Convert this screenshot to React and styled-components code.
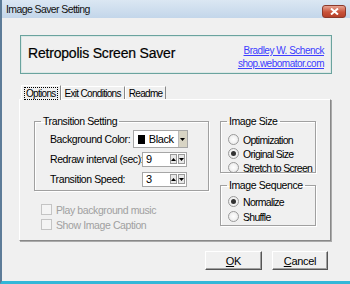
import React from 'react';
import styled, { createGlobalStyle } from 'styled-components';

const Global = createGlobalStyle`
  html, body { margin: 0; padding: 0; background: #f0f0f0; }
  body {
    font-family: "Liberation Sans", Arial, sans-serif;
    font-size: 10.5px;
    letter-spacing: -0.4px;
    color: #000;
  }
`;

const Win = styled.div`
  width: 350px;
  height: 284px;
  box-sizing: border-box;
  background: #f0f0f0;
  border-left: 2px solid #5d7c98;
  border-bottom: 3px solid #33b7d8;
  display: flex;
  flex-direction: column;
  overflow: hidden;
`;

const TitleBar = styled.div`
  height: 18px;
  flex: none;
  display: flex;
  align-items: center;
  justify-content: space-between;
  padding: 0 4px 0 4px;
  background: linear-gradient(#dbe7f3, #c3d6ea);
  font-size: 10.5px;
  letter-spacing: -0.6px;
  color: #111;
`;

const CloseBtn = styled.div`
  width: 22px;
  height: 11px;
  margin-top: 5px;
  border: 1px solid #8b3a2c;
  border-radius: 3px;
  background: linear-gradient(#e7a493, #c9533a 55%, #b6412a);
  display: flex;
  align-items: center;
  justify-content: center;
  svg { display: block; }
`;

const Body = styled.div`
  flex: 1;
  padding: 17px 0 0 18px;
  display: flex;
  flex-direction: column;
  align-items: flex-start;
`;

const Header = styled.div`
  width: 312px;
  height: 39px;
  box-sizing: border-box;
  border: 1px solid #6aa39e;
  box-shadow: inset 0 0 0 1px #dce8e6;
  display: flex;
  align-items: center;
  justify-content: space-between;
  padding: 0 7px 0 7px;
`;

const AppName = styled.div`
  font-size: 14px;
  letter-spacing: -0.2px;
  margin-top: -4px;
  -webkit-text-stroke: 0.2px #000;
`;

const Links = styled.div`
  display: flex;
  flex-direction: column;
  align-items: flex-end;
  gap: 2px;
  margin-top: 5px;
  a {
    color: #3d3dff;
    font-size: 10px;
    text-decoration: underline;
    letter-spacing: -0.5px;
  }
`;

const Tabs = styled.div`
  display: flex;
  margin-top: 11px;
  margin-left: 1px;
  height: 14px;
  align-items: flex-end;
  font-size: 10px;
  letter-spacing: -0.7px;
`;

const Tab = styled.div`
  height: ${p => (p.$active ? '15px' : '13px')};
  box-sizing: border-box;
  padding: 0 ${p => (p.$active ? '3px' : '2px')};
  border: 1px solid #fff;
  border-right-color: #888;
  border-bottom: none;
  display: flex;
  align-items: center;
  background: #f0f0f0;
  position: relative;
  z-index: ${p => (p.$active ? 2 : 1)};
  margin-bottom: ${p => (p.$active ? '-1px' : '0')};
  span {
    outline: ${p => (p.$active ? '1px dotted #000' : 'none')};
    padding: 0 1px;
    line-height: 11px;
  }
`;

const Panel = styled.div`
  width: 312px;
  height: 142px;
  margin-left: -1px;
  box-sizing: border-box;
  border: 1px solid #fff;
  border-right-color: #888;
  border-bottom-color: #888;
  box-shadow: 1px 1px 0 #aaa;
  display: flex;
  padding: 15px 0 0 14px;
  gap: 11px;
`;

const Column = styled.div`
  display: flex;
  flex-direction: column;
`;

const Group = styled.fieldset`
  margin: 0;
  margin-top: ${p => p.$top || 0}px;
  padding: 0;
  border: 1px solid #a0a0a0;
  box-shadow: 1px 1px 0 #fff, inset 1px 1px 0 #fff;
  width: ${p => p.$w}px;
  height: ${p => p.$h}px;
  box-sizing: border-box;
  legend {
    padding: 0 2px;
    margin-left: 6px;
  }
`;

const Rows = styled.div`
  display: flex;
  flex-direction: column;
  gap: ${p => p.$gap}px;
  padding: ${p => p.$pad};
`;

const Row = styled.div`
  display: flex;
  align-items: center;
  height: 14px;
`;

const Label = styled.div`
  width: 83px;
  white-space: nowrap;
`;

const Combo = styled.div`
  width: 55px;
  height: 18px;
  box-sizing: border-box;
  border: 1px solid #a6a6a6;
  background: #fff;
  display: flex;
  align-items: center;
  padding-left: 4px;
  gap: 4px;
  font-size: 11px;
`;

const Swatch = styled.div`
  width: 9px;
  height: 9px;
  background: #000;
`;

const ComboArrow = styled.div`
  margin-left: auto;
  width: 11px;
  height: 16px;
  background: #d8d4c4;
  border-left: 1px solid #bbb;
  display: flex;
  align-items: center;
  justify-content: center;
`;

const Spin = styled.div`
  width: 45px;
  height: 15px;
  box-sizing: border-box;
  border: 1px solid #a6a6a6;
  background: #fff;
  display: flex;
  align-items: center;
  padding-left: 3px;
  margin-left: 9px;
  font-size: 11px;
`;

const SpinBtns = styled.div`
  margin-left: auto;
  display: flex;
  gap: 1px;
  padding-right: 1px;
  div {
    width: 7px;
    height: 10px;
    background: #e8e8e8;
    border: 1px solid #999;
    box-sizing: border-box;
    display: flex;
    align-items: center;
    justify-content: center;
  }
`;

const Checks = styled.div`
  display: flex;
  flex-direction: column;
  gap: 2px;
  margin-top: 12px;
  margin-left: 7px;
`;

const Check = styled.div`
  display: flex;
  align-items: center;
  gap: 4px;
  color: #a0a0a0;
  height: 13px;
`;

const Box = styled.div`
  width: 11px;
  height: 11px;
  box-sizing: border-box;
  border: 1px solid #c4c4c4;
  background: #f4f4f4;
`;

const Radio = styled.div`
  display: flex;
  align-items: center;
  gap: 4px;
  height: 13px;
  white-space: nowrap;
  font-size: 10.5px;
  letter-spacing: -0.7px;
`;

const Dot = styled.div`
  width: 11px;
  height: 11px;
  flex: none;
  box-sizing: border-box;
  border-radius: 50%;
  border: 1px solid #9a9a9a;
  background: radial-gradient(#fff, #e6e6e6);
  display: flex;
  align-items: center;
  justify-content: center;
  &::after {
    content: '';
    width: 5px;
    height: 5px;
    border-radius: 50%;
    background: ${p => (p.$on ? '#333' : 'transparent')};
  }
`;

const Buttons = styled.div`
  display: flex;
  justify-content: flex-end;
  gap: 10px;
  margin-top: 10px;
  width: 308px;
`;

const Btn = styled.button`
  width: ${p => p.$w}px;
  height: 19px;
  box-sizing: border-box;
  background: #f0f0f0;
  border: 1px solid;
  border-color: #fff #555 #555 #fff;
  box-shadow: inset -1px -1px 0 #a0a0a0;
  font-family: "Liberation Sans", Arial, sans-serif;
  font-size: 11px;
  letter-spacing: -0.3px;
  padding: 0;
  color: #000;
  u { text-decoration: underline; }
`;

const Arrow = ({ up }) => (
  <svg width="5" height="3" viewBox="0 0 5 3">
    <path d={up ? 'M0 3 L2.5 0 L5 3 Z' : 'M0 0 L5 0 L2.5 3 Z'} fill="#000" />
  </svg>
);

function SpinBox({ value }) {
  return (
    <Spin>
      {value}
      <SpinBtns>
        <div><Arrow up /></div>
        <div><Arrow /></div>
      </SpinBtns>
    </Spin>
  );
}

export default function App() {
  return (
    <Win>
      <Global />
      <TitleBar>
        <span>Image Saver Setting</span>
        <CloseBtn>
          <svg width="9" height="7" viewBox="0 0 9 7">
            <path d="M1 0.5 L8 6.5 M8 0.5 L1 6.5" stroke="#fff" strokeWidth="2" />
          </svg>
        </CloseBtn>
      </TitleBar>
      <Body>
        <Header>
          <AppName>Retropolis Screen Saver</AppName>
          <Links>
            <a>Bradley W. Schenck</a>
            <a>shop.webomator.com</a>
          </Links>
        </Header>
        <Tabs>
          <Tab $active><span>Options</span></Tab>
          <Tab><span>Exit Conditions</span></Tab>
          <Tab><span>Readme</span></Tab>
        </Tabs>
        <Panel>
          <Column>
            <Group $w={175} $h={76}>
              <legend>Transition Setting</legend>
              <Rows $gap={6} $pad="5px 0 0 15px">
                <Row>
                  <Label>Background Color:</Label>
                  <Combo>
                    <Swatch />
                    Black
                    <ComboArrow><Arrow /></ComboArrow>
                  </Combo>
                </Row>
                <Row>
                  <Label>Redraw interval (sec):</Label>
                  <SpinBox value="9" />
                </Row>
                <Row>
                  <Label>Transition Speed:</Label>
                  <SpinBox value="3" />
                </Row>
              </Rows>
            </Group>
            <Checks>
              <Check><Box />Play background music</Check>
              <Check><Box />Show Image Caption</Check>
            </Checks>
          </Column>
          <Column>
            <Group $w={96} $h={58}>
              <legend>Image Size</legend>
              <Rows $gap={1} $pad="6px 0 0 7px">
                <Radio><Dot />Optimization</Radio>
                <Radio><Dot $on />Original Size</Radio>
                <Radio><Dot />Stretch to Screen</Radio>
              </Rows>
            </Group>
            <Group $w={96} $h={47} $top={6}>
              <legend>Image Sequence</legend>
              <Rows $gap={2} $pad="4px 0 0 7px">
                <Radio><Dot $on />Normalize</Radio>
                <Radio><Dot />Shuffle</Radio>
              </Rows>
            </Group>
          </Column>
        </Panel>
        <Buttons>
          <Btn $w={57}><u>O</u>K</Btn>
          <Btn $w={56}><u>C</u>ancel</Btn>
        </Buttons>
      </Body>
    </Win>
  );
}
